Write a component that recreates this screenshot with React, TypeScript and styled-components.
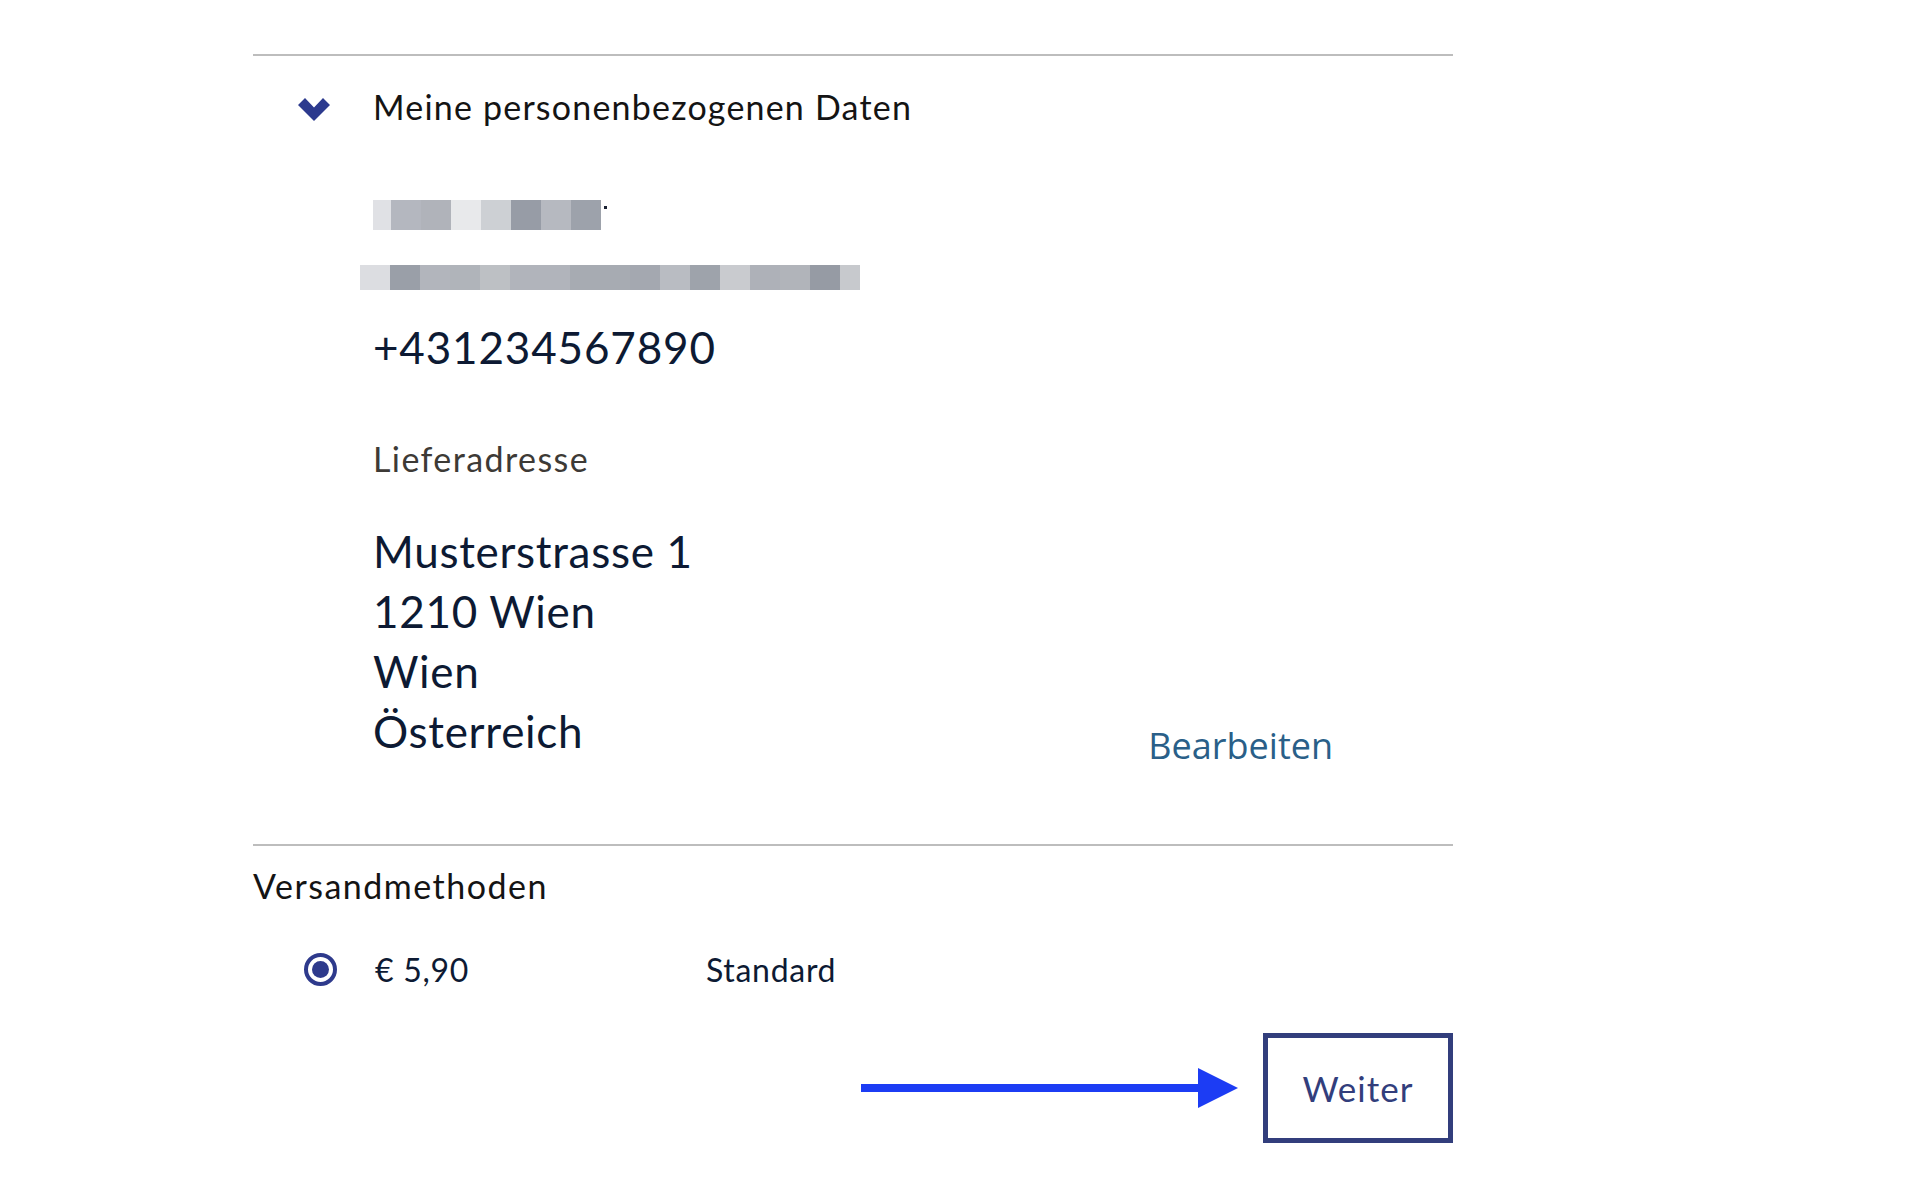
import styled, { createGlobalStyle } from "styled-components";

const GlobalStyle = createGlobalStyle`
  body {
    margin: 0;
    background: #ffffff;
    font-family: "Lato", "Noto Sans", sans-serif;
  }
`;

const Page = styled.div`
  width: 1200px;
  margin-left: 253px;
  padding-top: 54px;
  padding-bottom: 40px;
`;

const Divider = styled.div`
  height: 2px;
  background-color: #bdbdbd;
`;

const Header = styled.div`
  height: 106px;
  display: flex;
  align-items: center;
  padding-left: 45px;
`;

const Chevron = styled.svg`
  width: 32px;
  height: 24px;
  margin-right: 43px;
  margin-top: 2px;
`;

const Title = styled.div`
  font-size: 34px;
  letter-spacing: 1.2px;
  color: #141414;
  padding-bottom: 5px;
`;

const Details = styled.div`
  padding-left: 120px;
`;

const PixelRow = styled.div<{ $top: number; $shift?: number; $h: number }>`
  display: flex;
  align-items: flex-start;
  height: ${(p) => p.$h}px;
  margin-top: ${(p) => p.$top}px;
  margin-left: ${(p) => p.$shift || 0}px;
`;

const Pixel = styled.div<{ $c: string; $w?: number }>`
  width: ${(p) => p.$w || 30}px;
  height: 100%;
  background-color: ${(p) => p.$c};
`;

const Dot = styled.span`
  width: 3px;
  height: 3px;
  margin: 6px 0 0 3px;
  background-color: #1b2233;
`;

const Phone = styled.div`
  margin-top: 27px;
  font-size: 44px;
  letter-spacing: 0.85px;
  line-height: 60px;
  color: #0d1a33;
`;

const Label = styled.div`
  margin-top: 60px;
  font-size: 34px;
  letter-spacing: 1.4px;
  line-height: 44px;
  color: #3d3a36;
`;

const AddressRow = styled.div`
  margin-top: 40px;
  margin-bottom: 83px;
  display: flex;
  justify-content: space-between;
  align-items: flex-end;
  padding-right: 120px;
`;

const Address = styled.div`
  font-size: 44px;
  letter-spacing: 0.7px;
  line-height: 60px;
  color: #0d1a33;
`;

const EditLink = styled.a`
  font-family: "Open Sans", "Noto Sans", sans-serif;
  font-size: 36px;
  line-height: 36px;
  margin-bottom: -3px;
  color: #2a5f88;
  text-decoration: none;
  cursor: pointer;
`;

const SectionTitle = styled.div`
  margin-top: 18px;
  font-size: 34px;
  letter-spacing: 1.5px;
  line-height: 44px;
  color: #141414;
`;

const MethodRow = styled.label`
  margin-top: 39px;
  height: 44px;
  display: flex;
  align-items: center;
  padding-left: 51px;
  font-size: 32px;
  letter-spacing: 0.7px;
  color: #0d1a33;
`;

const Radio = styled.span`
  width: 33px;
  height: 33px;
  box-sizing: border-box;
  border: 4px solid #2e3a8c;
  border-radius: 50%;
  display: flex;
  align-items: center;
  justify-content: center;
  margin-right: 38px;

  &::after {
    content: "";
    width: 17px;
    height: 17px;
    border-radius: 50%;
    background-color: #2e3a8c;
  }
`;

const Price = styled.span`
  width: 331px;
`;

const Actions = styled.div`
  margin-top: 42px;
  display: flex;
  justify-content: flex-end;
  align-items: center;
  gap: 25px;
`;

const Arrow = styled.svg`
  width: 377px;
  height: 40px;
`;

const NextButton = styled.button`
  width: 190px;
  height: 110px;
  box-sizing: border-box;
  border: 5px solid #323e7c;
  background: #ffffff;
  color: #323e7c;
  font-family: "Lato", "Noto Sans", sans-serif;
  font-size: 35px;
  letter-spacing: 1px;
  cursor: pointer;
`;

const row1 = ["#e0e1e5", "#b4b7bf", "#b0b3ba", "#e8e9eb", "#cdd0d4", "#979ca6", "#b6b9c0", "#9da2ab"];
const row2 = [
  "#dcdde1", "#9a9fa8", "#b2b5bc", "#b0b4ba", "#bdc0c4", "#b1b4bb", "#b1b4bb", "#a7abb2",
  "#a7abb2", "#a4a8b0", "#b9bcc2", "#9ea3ab", "#c9cbcf", "#aeb1b8", "#b1b4ba", "#969ba4",
  "#c7c9cd",
];

export default function App() {
  return (
    <>
      <GlobalStyle />
      <Page>
        <Divider />
        <Header>
          <Chevron viewBox="0 0 32 24">
            <polygon points="0,7 7,0 16,9.5 25,0 32,7 16,23" fill="#2c3a8e" />
          </Chevron>
          <Title>Meine personenbezogenen Daten</Title>
        </Header>
        <Details>
          <PixelRow $top={38} $h={30}>
            {row1.map((c, i) => (
              <Pixel key={i} $c={c} $w={i === 0 ? 18 : 30} />
            ))}
            <Dot />
          </PixelRow>
          <PixelRow $top={35} $shift={-13} $h={25}>
            {row2.map((c, i) => (
              <Pixel key={i} $c={c} $w={i === row2.length - 1 ? 20 : 30} />
            ))}
          </PixelRow>
          <Phone>+431234567890</Phone>
          <Label>Lieferadresse</Label>
          <AddressRow>
            <Address>
              Musterstrasse 1<br />
              1210 Wien<br />
              Wien<br />
              Österreich
            </Address>
            <EditLink>Bearbeiten</EditLink>
          </AddressRow>
        </Details>
        <Divider />
        <SectionTitle>Versandmethoden</SectionTitle>
        <MethodRow>
          <Radio />
          <Price>€ 5,90</Price>
          <span>Standard</span>
        </MethodRow>
        <Actions>
          <Arrow viewBox="0 0 377 40">
            <line x1="0" y1="20" x2="340" y2="20" stroke="#1c3cf4" strokeWidth="8" />
            <polygon points="337,0 377,20 337,40" fill="#1c3cf4" />
          </Arrow>
          <NextButton>Weiter</NextButton>
        </Actions>
      </Page>
    </>
  );
}
